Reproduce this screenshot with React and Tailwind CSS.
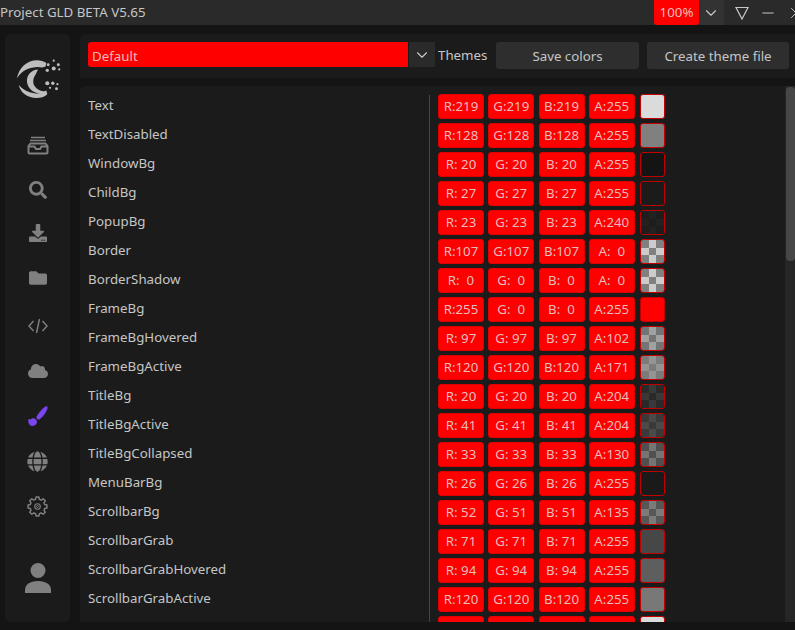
import { ChevronDown, Minus, X } from 'lucide-react';
import { FaCloud, FaDownload, FaFolder, FaGlobe, FaSearch } from 'react-icons/fa';

const rows = [
  ['Text', 219, 219, 219, 255],
  ['TextDisabled', 128, 128, 128, 255],
  ['WindowBg', 20, 20, 20, 255],
  ['ChildBg', 27, 27, 27, 255],
  ['PopupBg', 23, 23, 23, 240],
  ['Border', 107, 107, 107, 0],
  ['BorderShadow', 0, 0, 0, 0],
  ['FrameBg', 255, 0, 0, 255],
  ['FrameBgHovered', 97, 97, 97, 102],
  ['FrameBgActive', 120, 120, 120, 171],
  ['TitleBg', 20, 20, 20, 204],
  ['TitleBgActive', 41, 41, 41, 204],
  ['TitleBgCollapsed', 33, 33, 33, 130],
  ['MenuBarBg', 26, 26, 26, 255],
  ['ScrollbarBg', 52, 51, 51, 135],
  ['ScrollbarGrab', 71, 71, 71, 255],
  ['ScrollbarGrabHovered', 94, 94, 94, 255],
  ['ScrollbarGrabActive', 120, 120, 120, 255],
  ['CheckMark', 219, 219, 219, 255],
];

const pad = (n) => String(n).padStart(3, ' ');

const blend = (c, a, bg) => Math.round((c * a + bg * (255 - a)) / 255);

const Swatch = ({ r, g, b, a }) => {
  const mix = (bg) => `rgb(${blend(r, a, bg)},${blend(g, a, bg)},${blend(b, a, bg)})`;
  if (a === 255) {
    return <div className="w-[25px] h-[25px] rounded-[3px] border border-[#c00000]" style={{ backgroundColor: mix(0) }} />;
  }
  return (
    <div className="w-[25px] h-[25px] rounded-[3px] border border-[#c00000] overflow-hidden grid grid-cols-3 grid-rows-3">
      {[0, 1, 2, 3, 4, 5, 6, 7, 8].map((i) => (
        <div key={i} style={{ backgroundColor: mix(i % 2 ? 204 : 128) }} />
      ))}
    </div>
  );
};

const Cell = ({ label, value }) => (
  <div className="w-[46px] h-[25px] rounded-[3px] bg-[#ff0000] border border-[#e00000] flex items-center justify-center text-[#e8bcbc] whitespace-pre">
    {label}:{pad(value)}
  </div>
);

const InboxIcon = () => (
  <svg width="22" height="20" viewBox="0 0 22 20" fill="none" stroke="#808080">
    <path d="M4 2.500h14M3 5.500h16" strokeWidth="1.600" />
    <path d="M3.500 8.500L1.500 11v6.500a1 1 0 0 0 1 1h17a1 1 0 0 0 1-1V11l-2-2.500h-15z" strokeWidth="2" />
    <path d="M2 11.500h5.500l1.500 2.500h4l1.500-2.500H20" strokeWidth="2" />
  </svg>
);

const CodeIcon = () => (
  <svg width="20" height="16" viewBox="0 0 20 16" fill="none" stroke="#808080" strokeWidth="1.400">
    <path d="M5.500 3L1 8l4.500 5M14.500 3L19 8l-4.500 5M11.500 1L8.500 15" />
  </svg>
);

const BrushIcon = () => (
  <svg width="20" height="20" viewBox="0 0 20 20" fill="#7a45f0">
    <path d="M17.500 0.500c1.500-.5 2.500.5 2 2-1.500 4-4 7.500-7.500 10.500-1 .8-2.200.6-3-.2-.8-.8-.8-2 0-3 2.500-3.800 5-7.500 8.500-9.300z" />
    <path d="M0.500 13c1 .5 2 .5 3.200-.2 1.300-.8 3-.6 4.300 .6 1.200 1.200 1.300 3 .4 4.400-1 1.500-2.500 2.200-4.200 2.200-3 0-4.500-3.500-3.700-7z" />
  </svg>
);

const GearIcon = () => (
  <svg width="21" height="21" viewBox="-1 -1 26 26" fill="none" stroke="#808080" strokeWidth="1.800" strokeLinejoin="round">
    <path d="M10.200 1.500h3.600l.6 2.800 2.200.9 2.400-1.600 2.600 2.600-1.600 2.400.9 2.200 2.800.6v3.600l-2.800.6-.9 2.200 1.600 2.400-2.600 2.600-2.400-1.600-2.200.9-.6 2.800h-3.600l-.6-2.800-2.200-.9-2.400 1.600-2.600-2.600 1.600-2.400-.9-2.200-2.800-.6v-3.600l2.800-.6.9-2.200-1.600-2.400 2.600-2.600 2.400 1.600 2.200-.9z" transform="translate(0 -1.200)" />
    <circle cx="12" cy="12" r="3.500" strokeWidth="1.300" />
    <circle cx="12" cy="12" r="1.300" strokeWidth="1.100" />
  </svg>
);

const UserIcon = () => (
  <svg width="26" height="30" viewBox="0 0 26 30" fill="#808080">
    <circle cx="13" cy="7.500" r="7.500" />
    <path d="M0 30v-3c0-5.500 5-9 13-9s13 3.500 13 9v3z" />
  </svg>
);

const Logo = () => (
  <svg width="46" height="42" viewBox="0 0 50 45" fill="#bdbdbd">
    <path d="M1 21C3 9 12 1 23 1c4 0 7 1 10 3l-1 4-4 1c-3-1-6-1-9 0C11 10 5 14 1 21z" />
    <path d="M24 11c-7 0-13 6-12 14 1 7 7 12 14 12 3 0 5-1 7-2-3 0-9-1-12-5-3-3-3-9 0-13 1-2 2-4 3-6z" />
    <path d="M3 28c2 9 10 14 19 14 5 0 9-1 12-4l-1-4c-4 2-9 4-13 3C13 36 7 33 3 28z" />
    <circle cx="41" cy="1.500" r="1.200" />
    <circle cx="35" cy="6" r="1.600" />
    <circle cx="46" cy="6" r="1.600" />
    <circle cx="41" cy="10" r="2.200" />
    <circle cx="34" cy="12" r="1.800" />
    <circle cx="47" cy="11" r="1.200" />
    <circle cx="34" cy="26" r="2.200" />
    <circle cx="40" cy="26" r="1.800" />
    <circle cx="45" cy="27" r="1.200" />
    <circle cx="37" cy="31" r="1.200" />
    <circle cx="44" cy="32" r="1.600" />
  </svg>
);

const navIcons = [
  <InboxIcon />,
  <FaSearch size={18} color="#808080" />,
  <FaDownload size={18} color="#808080" className="mb-[4px]" />,
  <FaFolder size={18} color="#808080" className="mb-[4px]" />,
  <CodeIcon />,
  <FaCloud size={20} color="#808080" />,
  <BrushIcon />,
  <FaGlobe size={21} color="#808080" />,
  <GearIcon />,
];

export default function App() {
  return (
    <div className="w-[795px] h-[630px] overflow-hidden bg-[#141414] text-[13.3px] text-[#c6c6c6] flex flex-col" style={{ fontFamily: '"Noto Sans", sans-serif' }}>
      <div className="h-[25px] shrink-0 bg-[#2a2a2a] flex items-center">
        <span className="flex-1 pt-[1px]">Project GLD BETA V5.65</span>
        <div className="w-[45px] h-[25px] bg-[#ff0000] rounded-b-[3px] flex items-center justify-center text-[#e8bcbc]">100%</div>
        <div className="w-[25px] h-[25px] bg-[#333333] flex items-center justify-center pr-[1px]">
          <ChevronDown size={18} color="#c8c8c8" strokeWidth={1.500} />
        </div>
        <div className="w-[71px] shrink-0 flex items-center overflow-hidden pl-[11px] gap-[10px]">
          <svg width="14" height="14" viewBox="0 0 14 14" fill="none" stroke="#c8c8c8" strokeWidth="1.200" className="shrink-0">
            <path d="M1 1.500h12L7 13z" />
          </svg>
          <Minus size={18} color="#c8c8c8" strokeWidth={1.300} className="shrink-0" />
          <X size={18} color="#c8c8c8" strokeWidth={1.300} className="shrink-0" />
        </div>
      </div>

      <div className="flex-1 min-h-0 flex gap-[10px] pt-[9px] pb-[8px] pl-[5px]">
        <div className="w-[65px] shrink-0 bg-[#1b1b1b] rounded-[5px] flex flex-col items-center">
          <div className="h-[88px] shrink-0 pt-[25px] pl-[3px]">
            <Logo />
          </div>
          <div className="flex flex-col items-center">
            {navIcons.map((icon, i) => (
              <div key={i} className="h-[45.250px] flex items-center justify-center">{icon}</div>
            ))}
          </div>
          <div className="mt-[34px]">
            <UserIcon />
          </div>
        </div>

        <div className="flex-1 min-w-0 flex flex-col gap-[8px]">
          <div className="h-[44px] shrink-0 bg-[#1b1b1b] rounded-tl-[5px] flex items-start pt-[8px] pl-[8px]">
            <div className="w-[320px] h-[25px] bg-[#ff0000] rounded-l-[3px] flex items-center pl-[4px] pt-[4px] text-[#e8bcbc]">Default</div>
            <div className="w-[26px] h-[25px] ml-[1px] bg-[#2a2a2a] flex items-center justify-center">
              <ChevronDown size={18} color="#c8c8c8" strokeWidth={1.500} />
            </div>
            <span className="ml-[3px] w-[58px] leading-[27px]">Themes</span>
            <button className="w-[143px] h-[27px] bg-[#2e2e2e] rounded-[3px] pt-[3px]">Save colors</button>
            <button className="ml-[8px] w-[142px] h-[27px] bg-[#2e2e2e] rounded-[3px] pt-[3px]">Create theme file</button>
          </div>

          <div className="flex-1 min-h-0 bg-[#1b1b1b] rounded-tl-[5px] flex overflow-hidden">
            <div className="flex-1 min-w-0 pl-[8px] pt-[8px] relative overflow-hidden">
              <div className="absolute left-[349px] top-[9px] bottom-0 w-px bg-[#454545]" />
              <div className="flex flex-col gap-[4px]">
                {rows.map(([name, r, g, b, a]) => (
                  <div key={name} className="flex items-center h-[25px] shrink-0">
                    <span className="w-[350px] shrink-0 pb-[1px]">{name}</span>
                    <div className="flex gap-[4.250px]">
                      <Cell label="R" value={r} />
                      <Cell label="G" value={g} />
                      <Cell label="B" value={b} />
                      <Cell label="A" value={a} />
                    </div>
                    <div className="ml-[5.250px]">
                      <Swatch r={r} g={g} b={b} a={a} />
                    </div>
                  </div>
                ))}
              </div>
            </div>
            <div className="w-[10px] shrink-0 bg-[#262626] pt-[1px] pl-[1px]">
              <div className="w-[9px] h-[174px] bg-[#474747] rounded-[4px]" />
            </div>
          </div>
        </div>
      </div>
    </div>
  );
}
